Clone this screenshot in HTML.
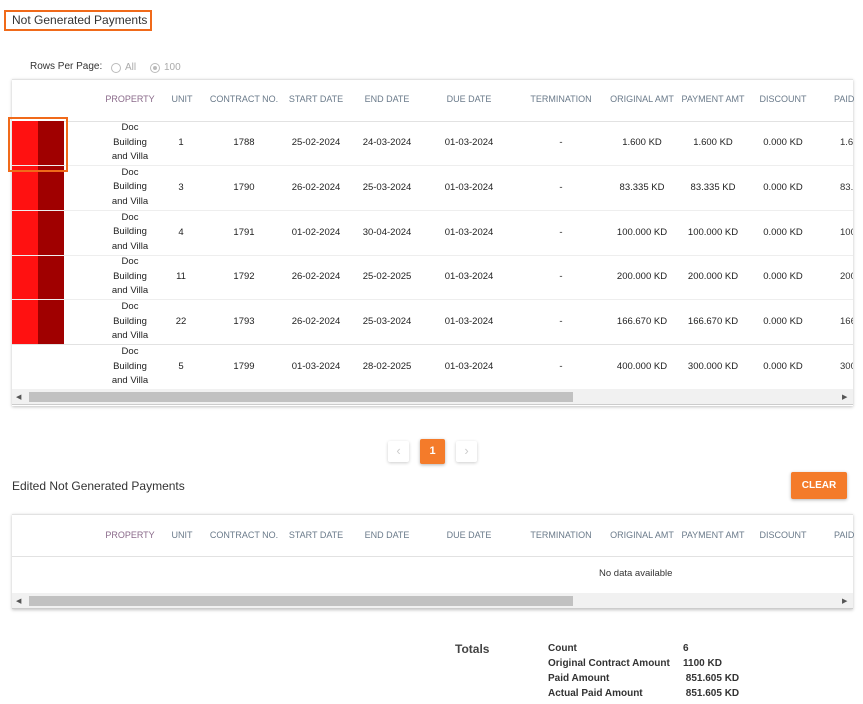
<!DOCTYPE html><html><head><style>
*{margin:0;padding:0;box-sizing:border-box}
body{width:863px;height:704px;background:#fff;font-family:"Liberation Sans",Arial,sans-serif;position:relative;overflow:hidden;color:#333}
.a{position:absolute;white-space:nowrap}
.h{font-size:9px;color:#6a7a8a;transform:translateX(-50%)}
.c{font-size:9.5px;color:#222;transform:translateX(-50%);text-align:center;line-height:14.5px}
.line{position:absolute;left:12px;width:841px;height:1px;background:#e2e2e2}
.sb{position:absolute;left:12px;width:841px;height:16px;background:#f1f1f1;border-bottom:1px solid #ccc}
.sb .t{position:absolute;left:17px;top:3px;width:544px;height:10px;background:#c1c1c1}
</style></head><body>
<div class="a" style="left:4px;top:10px;width:148px;height:21px;border:2px solid #f06a1a"></div>
<div class="a" style="left:12px;top:13px;font-size:12px;color:#333">Not Generated Payments</div>
<div class="a" style="left:30px;top:61px;font-size:10px;color:#333">Rows Per Page:</div>
<div class="a" style="left:111px;top:63px;width:10px;height:10px;border:1px solid #bbb;border-radius:50%"></div>
<div class="a" style="left:125px;top:62px;font-size:10px;color:#aaa">All</div>
<div class="a" style="left:150px;top:63px;width:10px;height:10px;border:1px solid #bbb;border-radius:50%"><div style="margin:2px;width:4px;height:4px;border-radius:50%;background:#bbb"></div></div>
<div class="a" style="left:164px;top:62px;font-size:10px;color:#aaa">100</div>
<div class="a" style="left:12px;top:79px;width:841px;height:327px;box-shadow:0 1px 3px rgba(0,0,0,.25)"></div>
<div class="line" style="top:79px"></div>
<div class="a h" style="left:130px;top:94px;color:#8a6a8a">PROPERTY</div>
<div class="a h" style="left:182px;top:94px">UNIT</div>
<div class="a h" style="left:244px;top:94px">CONTRACT NO.</div>
<div class="a h" style="left:316px;top:94px">START DATE</div>
<div class="a h" style="left:387px;top:94px">END DATE</div>
<div class="a h" style="left:469px;top:94px">DUE DATE</div>
<div class="a h" style="left:561px;top:94px">TERMINATION</div>
<div class="a h" style="left:642px;top:94px">ORIGINAL AMT</div>
<div class="a h" style="left:713px;top:94px">PAYMENT AMT</div>
<div class="a h" style="left:783px;top:94px">DISCOUNT</div>
<div class="a" style="left:834px;top:94px;font-size:9px;color:#6a7a8a">PAID</div>
<div class="line" style="top:121px"></div>
<div id="rows"></div>
<div class="a" style="left:12px;top:121px;width:26px;height:223px;background:#ff1111"></div>
<div class="a" style="left:38px;top:121px;width:26px;height:223px;background:#a00000"></div>
<div class="line" style="top:165px;background:#eee"></div><div class="line" style="top:210px;background:#eee"></div><div class="line" style="top:255px;background:#eee"></div><div class="line" style="top:299px;background:#eee"></div><div class="line" style="top:344px"></div>
<div class="a" style="left:8px;top:117px;width:60px;height:55px;border:2px solid #f06a1a"></div>
<div class="sb" style="top:389px"><div class="t"></div><div class="a" style="left:4px;top:4px;font-size:7px;color:#555">◀</div><div class="a" style="left:830px;top:4px;font-size:7px;color:#555">▶</div></div>
<div class="a" style="left:388px;top:441px;width:21px;height:21px;background:#fff;box-shadow:0 1px 3px rgba(0,0,0,.2);border-radius:2px;text-align:center;color:#ccc;font-size:13px;line-height:20px">‹</div>
<div class="a" style="left:420px;top:439px;width:25px;height:25px;background:#f47b2a;box-shadow:0 1px 3px rgba(0,0,0,.3);border-radius:2px;text-align:center;color:#fff;font-size:11px;font-weight:bold;line-height:25px">1</div>
<div class="a" style="left:456px;top:441px;width:21px;height:21px;background:#fff;box-shadow:0 1px 3px rgba(0,0,0,.2);border-radius:2px;text-align:center;color:#ccc;font-size:13px;line-height:20px">›</div>
<div class="a" style="left:12px;top:479px;font-size:12px;color:#333">Edited Not Generated Payments</div>
<div class="a" style="left:791px;top:472px;width:56px;height:27px;background:#f47b2a;box-shadow:0 1px 3px rgba(0,0,0,.3);border-radius:2px;text-align:center;color:#fff;font-size:10px;font-weight:bold;line-height:27px">CLEAR</div>
<div class="a" style="left:12px;top:514px;width:841px;height:95px;box-shadow:0 1px 3px rgba(0,0,0,.25)"></div>
<div class="line" style="top:514px"></div>
<div class="a h" style="left:130px;top:530px;color:#8a6a8a">PROPERTY</div>
<div class="a h" style="left:182px;top:530px">UNIT</div>
<div class="a h" style="left:244px;top:530px">CONTRACT NO.</div>
<div class="a h" style="left:316px;top:530px">START DATE</div>
<div class="a h" style="left:387px;top:530px">END DATE</div>
<div class="a h" style="left:469px;top:530px">DUE DATE</div>
<div class="a h" style="left:561px;top:530px">TERMINATION</div>
<div class="a h" style="left:642px;top:530px">ORIGINAL AMT</div>
<div class="a h" style="left:713px;top:530px">PAYMENT AMT</div>
<div class="a h" style="left:783px;top:530px">DISCOUNT</div>
<div class="a" style="left:834px;top:530px;font-size:9px;color:#6a7a8a">PAID</div>
<div class="line" style="top:556px"></div>
<div class="a" style="left:599px;top:568px;font-size:9.5px;color:#333">No data available</div>
<div class="sb" style="top:593px"><div class="t"></div><div class="a" style="left:4px;top:4px;font-size:7px;color:#555">◀</div><div class="a" style="left:830px;top:4px;font-size:7px;color:#555">▶</div></div>
<div class="a" style="left:455px;top:642px;font-size:12px;font-weight:bold;color:#444">Totals</div>
<div class="a" style="left:548px;top:641px;font-size:10px;font-weight:bold;color:#333;line-height:15px">Count<br>Original Contract Amount<br>Paid Amount<br>Actual Paid Amount</div>
<div class="a" style="left:683px;top:641px;font-size:10px;font-weight:bold;color:#333;line-height:15px">6<br>1100 KD<br>&nbsp;851.605 KD<br>&nbsp;851.605 KD</div>
<script>
var d=[["1","1788","25-02-2024","24-03-2024","1.600 KD","1.600 KD","1.6"],["3","1790","26-02-2024","25-03-2024","83.335 KD","83.335 KD","83.33"],["4","1791","01-02-2024","30-04-2024","100.000 KD","100.000 KD","100"],["11","1792","26-02-2024","25-02-2025","200.000 KD","200.000 KD","200"],["22","1793","26-02-2024","25-03-2024","166.670 KD","166.670 KD","166.6"],["5","1799","01-03-2024","28-02-2025","400.000 KD","300.000 KD","300"]];
var h="";d.forEach(function(r,i){var y=121+i*44.8,m=y+15;
h+='<div class="a c" style="left:130px;top:'+(y)+'px">Doc<br>Building<br>and Villa</div>';
var xs=[181,244,316,387];for(var k=0;k<4;k++)h+='<div class="a c" style="left:'+xs[k]+'px;top:'+m+'px">'+r[k]+'</div>';
h+='<div class="a c" style="left:469px;top:'+m+'px">01-03-2024</div><div class="a c" style="left:561px;top:'+m+'px">-</div>';
h+='<div class="a c" style="left:642px;top:'+m+'px">'+r[4]+'</div><div class="a c" style="left:713px;top:'+m+'px">'+r[5]+'</div><div class="a c" style="left:783px;top:'+m+'px">0.000 KD</div>';
h+='<div class="a" style="left:840px;top:'+m+'px;font-size:9.5px;line-height:14.5px;width:13px;overflow:hidden">'+r[6]+'</div>';});
document.getElementById("rows").innerHTML=h;
</script>
</body></html>
